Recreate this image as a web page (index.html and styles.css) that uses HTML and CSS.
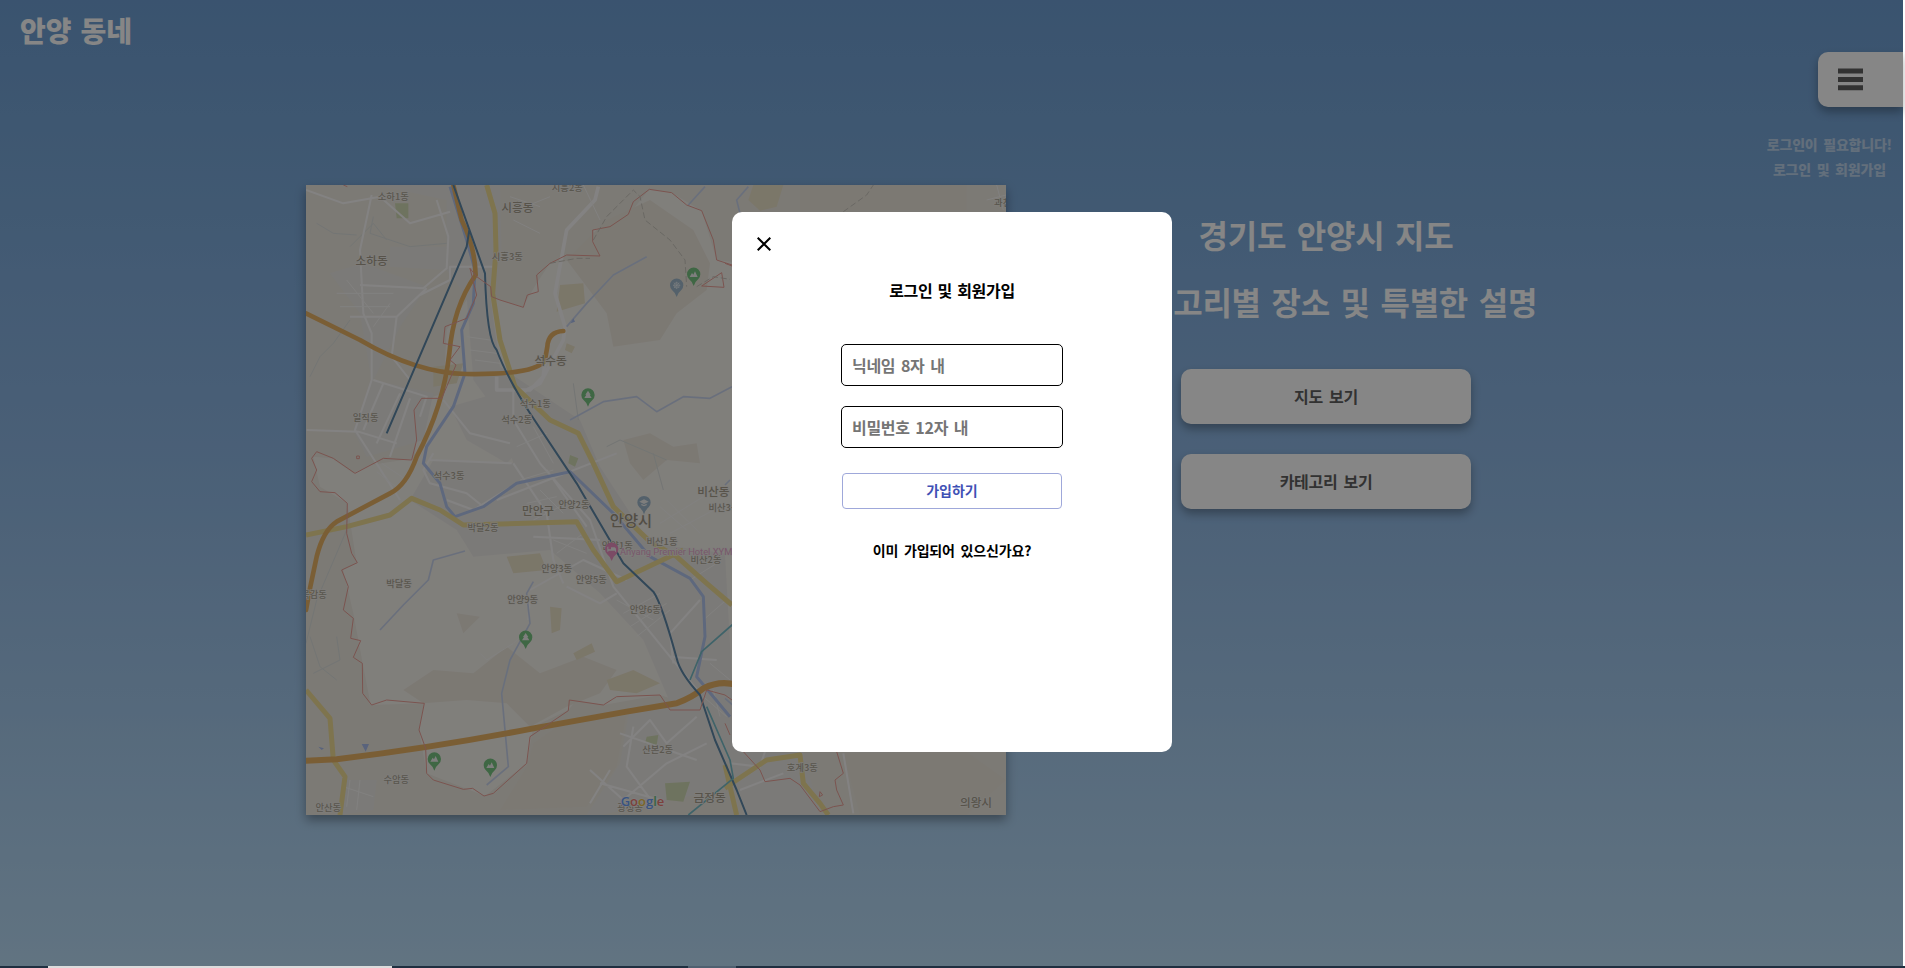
FILE: index.html
```html
<!DOCTYPE html>
<html lang="ko">
<head>
<meta charset="utf-8">
<title>안양 동네</title>
<link rel="stylesheet" href="styles.css">
</head>
<body>
<div class="app">
  <header class="header">
    <h1 class="logo">안양 동네</h1>
    <aside class="side">
      <button class="menu" aria-label="메뉴"><svg width="25" height="23" viewBox="0 0 25 23"><path d="M0 .5h25v5H0zM0 9h25v5H0zM0 17.2h25v5H0z"/></svg></button>
      <div class="notice"><p>로그인이 필요합니다!</p><p>로그인 및 회원가입</p></div>
    </aside>
  </header>
  <main class="main">
    <svg class="map" viewBox="18 15 2100 1890">
      <rect class="land" x="18" y="15" width="2100" height="1890"/>
      <path class="inner" d="M40 830L95 835 160 880 210 855 345 835 350 690 400 650 430 640 440 450 520 330 580 355 668 380 710 310 750 250 895 230 880 150 985 105 1048 28 1115 38 1205 92 1250 240 1500 270 2000 500 2000 1300 1700 1500 1200 1585 1080 1545 910 1575 830 1560 805 1590 700 1640 680 1750 555 1848 380 1780 357 1650 373 1570 212 1575 188 1450 160 1300 130 1170 170 1150 142 970 60 920Z"/>
      <g class="urban">
        <path d="M230 15H600L605 240 560 270 600 560 840 720 900 860 1050 1090 1275 1120 1296 1500 1400 1800 900 1905H860L960 1750 990 1580 1120 1590 1030 1380 900 1240 750 1110 520 1130 470 1050 330 960 400 840 640 850 600 710 520 600 500 350 440 270 440 60Z"/>
        <path d="M90 280L190 250 380 320 300 440 220 600 400 640 370 780 200 830 160 750 215 600 180 400Z"/>
        <path d="M270 200H440V270L270 260ZM590 640L650 660 710 760 620 850 500 780 450 680ZM120 1800H230L220 1890 120 1905ZM1296 1680H1500L1560 1905H1330Z"/>
      </g>
      <g class="forest">
        <path d="M800 240L920 120 1050 60 1180 150 1230 250 1220 330 1130 400 1080 480 940 500 920 400ZM970 780L1050 760 1120 800 1190 790 1200 850 1100 840 1030 900 990 850ZM310 1530L400 1470 520 1480 620 1400 720 1480 850 1430 950 1470 900 1540 800 1580 690 1640 620 1570 500 1560 370 1570ZM700 1690L800 1620 980 1600 950 1760 860 1880 600 1890 680 1760ZM470 1300L540 1310 490 1360ZM1630 1720L2000 1715 2118 1800 2000 1905H1680ZM1500 15H2000V90H1500Z"/>
      </g>
      <g class="park">
        <path d="M780 315L850 310 855 370 770 395ZM620 1130L720 1120 740 1170 640 1180ZM750 1280L785 1285 780 1350 755 1360ZM820 1420L875 1390 885 1415 830 1440ZM920 1500L1000 1470 1080 1510 1010 1540 930 1530ZM1360 15H1450L1430 80 1380 92 1345 60ZM400 560L490 550 470 610 400 620ZM800 490L825 500 815 520 795 510Z"/>
        <path class="green" d="M285 70H325V115H290ZM810 825L835 835 825 860 805 850ZM1040 1670L1075 1665 1070 1695 1035 1690ZM1095 1810L1170 1805 1150 1865 1100 1860Z"/>
      </g>
      <g class="creeks">
        <path d="M50 130L100 160 170 165M150 200L220 130 260 180M30 590L60 530 100 490 150 420M30 1370L60 1460 110 1500M40 1480L120 1440 110 1370M220 110L210 160 330 200 440 190M820 610L835 720M920 800L960 780 1100 840M18 1390L50 1260 140 1050M1090 930L1060 820"/>
      </g>
      <g class="roads">
        <path d="M18 30L130 70 240 50 330 130 450 95M215 45L180 210 190 400 215 460V600L165 750 300 960M180 315L370 325 440 265 445 170 410 60M150 410H290L380 325M290 410L275 530 330 600M20 750L175 755 290 790M220 600L380 650 360 710M250 610L190 750M300 640L230 790M330 655L270 830M360 345L450 300V260H580"/>
        <path class="wide" d="M895 20L885 60 800 150 765 340 795 440 790 480 720 610 660 640M735 540L730 590 690 630H590V590"/>
        <path d="M640 620V720L720 850 870 1020 940 1220 1110 1430 1200 1540M390 840L635 850M400 820L370 870 390 910 500 940 550 980M430 660L510 760 630 790M640 850L740 1000 760 1140 790 1210M740 870L860 1040M590 960L950 820M700 1070L900 1080M690 1230L850 1140 980 1200M685 1320L690 1250M440 960L520 990 650 910"/>
        <path d="M970 1700L1050 1620 1100 1690 1190 1610M870 1770L970 1860 1100 1750 1220 1690M1000 1640L980 1760 1060 1870M930 1770L870 1870M960 1660L1190 1740M900 1810L1080 1860M1630 1720L1660 1900M1290 1750L1380 1760 1400 1700M1320 1830L1450 1780M1110 1430L1250 1440M950 1240L900 1270 800 1220M1200 1260L1110 1360 1120 1450"/>
        <path class="streets" d="M140 300L220 400M110 340H280M120 380H270M220 440L270 370M245 850L320 900M230 875L300 930M720 930L790 1000M680 970L770 950M700 1020L820 960M660 900L760 870M500 470L570 480M510 510L590 520M525 540L600 550M700 740L760 850M650 800L740 760M950 1260L1060 1320M970 1300L1080 1240M990 1340L1100 1270M1010 1370L1110 1290M1080 980L1160 1050M1100 960L1200 1060M1080 1030L1210 950M1110 1060L1260 980M1170 1200L1250 1150M1210 1320L1290 1250M1230 1450L1290 1500M1210 1550L1280 1610M1240 1530L1260 1610M760 1080L860 1120M770 1120L850 1060M130 1820L220 1850M150 1800L140 1880M180 1800L170 1890M850 15L900 120M630 50L720 80M650 90L750 50M640 120L720 160M540 1420L560 1440 640 1390 670 1360M2060 60L2118 45M2090 15L2110 90"/>
      </g>
      <g class="river">
        <path d="M450 20L500 180 525 270 520 370 485 450 495 580 460 680 380 800 370 850 420 910 440 980 465 1010 550 980 650 910 810 875 940 1000 1050 1130 1170 1195 1210 1250 1215 1370 1190 1490 1290 1610"/>
        <path class="thin" d="M1040 230L940 285 860 370 800 440M810 720L910 665 1010 650 1070 695 1150 650 1230 655 1296 620M495 1113L400 1140 385 1200 310 1275 240 1350M700 1205L680 1240 690 1330 630 1440 605 1540 625 1760 560 1815M1275 915L1290 900M1275 1555L1350 1620M1165 75L1215 20M1345 20L1310 60 1320 100"/>
        <path class="pond" d="M185 1692H207L197 1715ZM55 1700L72 1705 65 1710ZM820 415L825 425 812 430Z"/>
      </g>
      <g class="yellow">
        <path d="M560 15L585 100 588 210 578 340 600 480 645 620 750 720 835 760 880 850 940 980 1050 1085 1130 1130 1220 1210 1296 1275M18 1065L140 1040 270 1005 335 955 420 990 490 1035 830 1025 880 1110 950 1205 1150 1110M18 1530L90 1615 100 1740 135 1790 120 1905"/>
        <path d="M1275 1825L1310 1800 1400 1740 1500 1725 1510 1810 1560 1870 1585 1905M1275 1755L1310 1905"/>
      </g>
      <g class="orange">
        <path d="M18 400L180 480Q350 580 500 582Q710 585 735 540L742 500Q745 455 790 453"/>
        <path d="M460 15L485 120Q525 200 527 285Q460 380 448 520Q430 680 350 830Q320 915 270 940L110 1025Q70 1050 50 1130L30 1225 18 1290"/>
        <path class="trunk" d="M18 1742L110 1738Q420 1700 700 1645L980 1595 1130 1570Q1180 1550 1210 1525 1260 1500 1310 1515L1400 1540"/>
      </g>
      <g class="rail">
        <path d="M460 15L555 280Q560 480 590 510Q620 590 690 700L830 910 970 1150 1060 1235Q1085 1270 1130 1435 1140 1480 1200 1545L1245 1680 1310 1830 1340 1905M508 150L500 200 260 760"/>
        <path class="teal" d="M1400 1250L1296 1335 1205 1415 1170 1500M1220 1580L1290 1740 1300 1795 1165 1905"/>
      </g>
      <g class="border">
        <path d="M130 15L142 20M1296 255L1250 240 1240 180 1205 92 1160 75 1115 38 1048 28 1000 65 985 103 930 140 878 150V185L900 228 800 225 750 250 710 285 715 335 682 345 670 382 600 360 575 350 572 320 530 290 510 265 530 345 500 415 435 440 430 490 480 500 450 540 468 555 440 620 425 655 365 655 342 690 350 780 335 840 250 835 165 880 100 835 50 815 35 835 50 870 35 905 60 935 105 938 142 970 140 1060 155 1120 172 1148 125 1170 145 1220 130 1290 160 1315 152 1375 182 1382 160 1432 187 1450 188 1540 215 1575 260 1560 373 1570 357 1650 377 1705 380 1780 400 1800 490 1828 518 1825 552 1848 580 1840 680 1750 690 1670 805 1592 808 1560 910 1575 950 1550 1080 1545 1110 1590 1200 1590 1220 1530 1275 1545 1296 1560M1205 318L1265 278 1272 322ZM170 828H178V836H170ZM1275 1630L1290 1665"/>
        <path d="M1330 1715L1380 1770 1395 1805 1470 1795 1500 1815 1560 1895 1600 1880 1630 1875 1610 1830 1605 1800 1630 1780 1610 1715M1560 1835L1568 1845 1558 1850ZM1275 250L1296 258"/>
        <path class="dash" d="M880 180L920 110 1000 30 1020 50 1035 120 1110 180 1155 240 1160 320M750 250L830 235 870 235M1190 320L1240 290 1290 298M1630 95L1700 45 1720 15"/>
      </g>
      <g class="labels">
        <text x="280" y="60">소하1동</text><text x="802" y="33">시흥2동</text><text class="big" x="652" y="97">시흥동</text><text x="622" y="241">시흥3동</text><text class="big" x="215" y="254">소하동</text><text class="big" x="752" y="555">석수동</text><text x="706" y="681">석수1동</text><text x="650" y="729">석수2동</text><text x="197" y="724">일직동</text><text x="447" y="896">석수3동</text><text class="big" x="1240" y="949">비산동</text><text x="1272" y="994">비산3동</text><text class="big" x="714" y="1004">만안구</text><text x="822" y="985">안양2동</text><text x="549" y="1054">박달2동</text><text class="city" x="993" y="1038">안양시</text><text x="952" y="1107">안양1동</text><text x="1086" y="1096">비산1동</text><text x="1218" y="1149">비산2동</text><text x="770" y="1175">안양3동</text><text x="874" y="1209">안양5동</text><text x="297" y="1220">박달동</text><text x="42" y="1255">목감동</text><text x="668" y="1270">안양9동</text><text x="1036" y="1298">안양6동</text><text x="1073" y="1720">산본2동</text><text x="289" y="1809">수암동</text><text x="85" y="1893">안산동</text><text class="big" x="1229" y="1865">금정동</text><text x="990" y="1892">광정동</text><text x="1507" y="1774">호계3동</text><text class="big" x="2028" y="1882">의왕시</text><text x="2108" y="77">과천</text>
        <text class="hotel" x="960" y="1125">Anyang Premier Hotel XYM</text>
      </g>
      <defs><path id="pin" d="M0 35Q-4 22-14 14A20 20 0 1 1 14 14Q4 22 0 35Z"/></defs>
      <g class="pins">
        <g transform="translate(1181 283)"><use href="#pin"/><path class="mark" d="M-12 8L-5-4-1 1 4-9 12 8Z"/></g>
        <g transform="translate(864 645)"><use href="#pin"/><path class="mark" d="M0-13L8-1H5L11 9H-11L-5-1H-8Z"/></g>
        <g transform="translate(677 1372)"><use href="#pin"/><path class="mark" d="M0-13L8-1H5L11 9H-11L-5-1H-8Z"/></g>
        <g transform="translate(403 1737)"><use href="#pin"/><path class="mark" d="M-12 8L-5-4-1 1 4-9 12 8Z"/></g>
        <g transform="translate(571 1756)"><use href="#pin"/><path class="mark" d="M-12 8L-5-4-1 1 4-9 12 8Z"/></g>
        <g class="blue" transform="translate(1130 316)"><use href="#pin"/><path class="ring" d="M0-11V11M-11 0H11M-8-8L8 8M8-8L-8 8M8 0A8 8 0 1 1-8 0A8 8 0 1 1 8 0"/></g>
        <g class="blue" transform="translate(1032 968)"><use href="#pin"/><path class="mark" d="M-14-3L0-10 14-3 0 4ZM-8 3L0 7 8 3V8Q0 13-8 8Z"/></g>
        <g class="pink" transform="translate(935 1108)"><use href="#pin"/><path class="mark" d="M-13-8H-10V0H-2V-6H9Q13-5 13 0V7H10V4H-10V7H-13Z"/></g>
      </g>
      <text class="google" x="962" y="1877"><tspan class="g-blue">G</tspan><tspan class="g-red">o</tspan><tspan class="g-yellow">o</tspan><tspan class="g-blue">g</tspan><tspan class="g-green">l</tspan><tspan class="g-red">e</tspan></text>
    </svg>
    <section class="intro">
      <h2>경기도 안양시 지도</h2>
      <h2>카테고리별 장소 및 특별한 설명</h2>
      <button class="action">지도 보기</button>
      <button class="action">카테고리 보기</button>
    </section>
  </main>
  <div class="overlay">
    <form class="modal">
      <svg class="close" width="14" height="14" viewBox="0 0 14 14"><path d="M.7.7l12.6 12.6M13.3.7L.7 13.3"/></svg>
      <h3>로그인 및 회원가입</h3>
      <input type="text" placeholder="닉네임 8자 내">
      <input type="password" placeholder="비밀번호 12자 내">
      <button class="join" type="button">가입하기</button>
      <p class="already">이미 가입되어 있으신가요?</p>
    </form>
  </div>
</div>
<div class="taskbar"><i class="tab"></i><i class="chip"></i></div>
</body>
</html>
```
FILE: styles.css
```css
* { box-sizing: border-box; }
body {
  margin: 0;
  height: 968px;
  overflow: hidden;
  background: #fff;
  font-family: "Noto Sans CJK KR", sans-serif;
  font-weight: 700;
}
h1, h2, h3, p { margin: 0; }
button, input { font: inherit; }
.app {
  position: relative;
  width: 1903px;
  height: 966px;
  background: linear-gradient(#6e9fd3, #91b9e4 52%, #b9dcf6);
}
.header {
  display: flex;
  justify-content: space-between;
  height: 185px;
  padding-left: 20px;
}
.logo {
  margin-top: 10px;
  font-size: 28px;
  font-weight: 900;
  line-height: 40px;
  letter-spacing: -.1px;
  word-spacing: 1.5px;
  color: #fff;
}
.side {
  display: flex;
  flex-direction: column;
  align-items: flex-end;
  padding-top: 52px;
}
.menu {
  display: flex;
  align-items: center;
  width: 85px;
  height: 55px;
  padding: 0 0 0 20px;
  border: 0;
  border-radius: 10px 0 0 10px;
  background: #fff;
  box-shadow: 0 5px 10px rgba(0, 0, 0, .3);
}
.menu svg { fill: #606060; }
.notice {
  margin: 25px 11px 0 0;
  font-size: 14px;
  font-weight: 900;
  line-height: 25px;
  letter-spacing: -.2px;
  text-align: center;
  word-spacing: 2px;
  color: rgba(255, 255, 255, .5);
}
.main {
  display: flex;
  padding-left: 306px;
}
.map {
  flex: none;
  width: 700px;
  height: 630px;
  box-shadow: 0 5px 10px rgba(0, 0, 0, .35);
}
.intro {
  display: flex;
  flex-direction: column;
  align-items: center;
  width: 440px;
  margin: 16px 0 0 100px;
}
.intro h2 {
  font-size: 32px;
  line-height: 67px;
  letter-spacing: -.25px;
  word-spacing: 2px;
  white-space: nowrap;
  color: #fff;
}
.action {
  width: 290px;
  height: 55px;
  margin-top: 30px;
  padding: 0 0 2px;
  border: 0;
  border-radius: 10px;
  background: #fff;
  box-shadow: 0 5px 10px rgba(0, 0, 0, .3);
  font-size: 16px;
  letter-spacing: -.3px;
  word-spacing: 2px;
  color: #606060;
}
.intro h2 + .action { margin-top: 34px; }
.overlay {
  position: absolute;
  inset: 0;
  display: flex;
  justify-content: center;
  align-items: flex-start;
  padding-top: 212px;
  background: rgba(0, 0, 0, .475);
}
.modal {
  display: flex;
  flex-direction: column;
  align-items: center;
  width: 440px;
  height: 540px;
  margin-left: 1px;
  padding-top: 25px;
  border-radius: 10px;
  background: #fff;
  color: #000;
}
.close {
  align-self: flex-start;
  margin-left: 25px;
  fill: none;
  stroke: #000;
  stroke-width: 2;
}
.modal h3 {
  margin-top: 27px;
  font-size: 16px;
  line-height: 24px;
  letter-spacing: -.3px;
  word-spacing: 1px;
}
.modal input {
  width: 222px;
  height: 42px;
  margin: 42px 0 0;
  padding: 0 10px 1px;
  border: 1px solid #000;
  border-radius: 5px;
  background: #fff;
  font-size: 16px;
  letter-spacing: -.3px;
  word-spacing: 1.5px;
}
.modal input + input { margin-top: 20px; }
.modal input::placeholder { color: #757575; opacity: 1; }
.join {
  width: 220px;
  height: 36px;
  margin-top: 25px;
  padding: 0 0 2px;
  border: 1px solid #9fa8da;
  border-radius: 4px;
  background: #fff;
  font-size: 14px;
  color: #3f51b5;
}
.already {
  margin-top: 31px;
  font-size: 14px;
  line-height: 21px;
  letter-spacing: -.15px;
  word-spacing: 2px;
}
.taskbar {
  display: flex;
  height: 2px;
  padding-left: 48px;
  background: #1f2f40;
}
.tab { width: 344px; background: #dcdcdc; }
.chip { width: 48px; margin-left: 296px; background: #4f6070; }

/* Map */
.land { fill: #ece8df; }
.inner { fill: #f4f1eb; }
.urban { fill: #ebe9e5; }
.forest { fill: #ece7db; }
.park { fill: #ebe2c8; }
.green { fill: #d2dbb5; }
.creeks, .roads, .river, .yellow, .orange, .rail, .border { fill: none; stroke-linejoin: round; }
.creeks { stroke: #dbdfdc; stroke-width: 3; }
.roads { stroke: #f9f8f7; stroke-width: 6; }
.wide { stroke-width: 11; }
.streets { stroke: #f6f5f3; stroke-width: 3; }
.river { stroke: #b4c6ee; stroke-width: 9; }
.thin { stroke: #c9d4ec; stroke-width: 5; }
.pond { fill: #a9bdec; stroke: none; }
.yellow { stroke: #efdc95; stroke-width: 15; }
.orange { stroke: #e9b366; stroke-width: 14; stroke-linecap: round; }
.trunk { stroke-width: 18; }
.rail { stroke: #5d87a8; stroke-width: 6; }
.teal { stroke: #78bdc8; stroke-width: 5; }
.border { stroke: #eba097; stroke-width: 3; }
.dash { stroke: #c9c5bd; stroke-dasharray: 18 9; }
.labels {
  font-size: 28px;
  font-weight: 500;
  text-anchor: middle;
  fill: #aca595;
  stroke: #f0eee9;
  stroke-width: 4;
  paint-order: stroke;
}
.labels .big { font-size: 35px; fill: #a79f8e; }
.labels .city { font-size: 46px; fill: #9c9381; }
.labels .hotel {
  font-family: Roboto, sans-serif;
  font-size: 28px;
  font-weight: 400;
  text-anchor: start;
  fill: #e6a6cc;
}
.pins { fill: #79c482; }
.blue { fill: #a0b9cc; }
.pink { fill: #ea8fc0; }
.mark { fill: #f0f0ee; }
.ring { fill: none; stroke: #e8eef2; stroke-width: 2; }
.google {
  font-family: "Open Sans", sans-serif;
  font-size: 39px;
  font-weight: 600;
  stroke: #f0f0f0;
  stroke-width: 4;
  paint-order: stroke;
}
.g-blue { fill: #6d9ff5; }
.g-red { fill: #ed7c73; }
.g-yellow { fill: #ecc14b; }
.g-green { fill: #71bf83; }
```
